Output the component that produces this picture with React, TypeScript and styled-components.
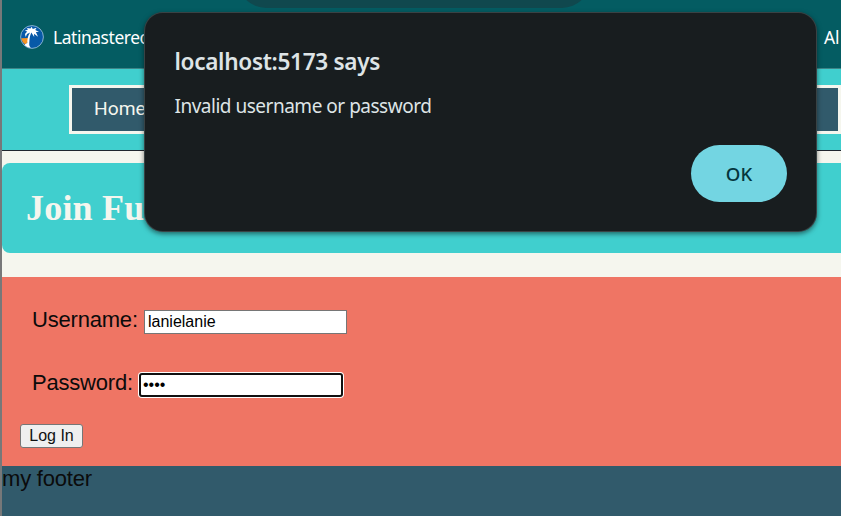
import React from "react";
import styled, { createGlobalStyle } from "styled-components";

const Global = createGlobalStyle`
  * { box-sizing: border-box; }
  html, body { margin: 0; overflow: hidden; background: #f5f6ee; }
`;

const ui = `"Noto Sans", "Open Sans", sans-serif`;
const arial = `"Liberation Sans", Arial, sans-serif`;

const Screen = styled.div`
  position: relative;
  width: 841px;
  height: 516px;
  overflow: hidden;
  border-left: 2px solid #777879;
  background: #f5f6ee;
  font-family: ${arial};
  color: #0b0b0b;
  display: flex;
  flex-direction: column;
`;

const BookmarkBar = styled.header`
  position: relative;
  flex: none;
  height: 69px;
  padding: 8px 0 0 18px;
  display: flex;
  align-items: center;
  justify-content: space-between;
  background: #045c62;
  border-bottom: 1px solid #3d8588;
  font: 17.4px/24px ${ui};
  color: #fff;
  white-space: nowrap;
`;

const Bookmark = styled.div`
  display: flex;
  align-items: center;
  gap: 9px;
  margin-top: -2px;
  letter-spacing: -0.42px;
`;

const AllBookmarks = styled.div`
  width: 17px;
  margin-top: -2px;
`;

const AddressPill = styled.div`
  position: absolute;
  top: -52px;
  left: 236px;
  width: 352px;
  height: 60px;
  border-radius: 28px;
  background: #10484e;
`;

const Nav = styled.nav`
  flex: none;
  height: 82px;
  padding: 16px 0 0 67px;
  background: #40cfce;
  border-bottom: 1px solid #20262e;
`;

const NavItem = styled.div`
  height: 49px;
  border: 3px solid #f5f6ee;
  background: #315a6b;
  padding-left: 22px;
  font: 19.2px/42px Roboto, sans-serif;
  color: #f5f6ee;
`;

const Banner = styled.h1`
  flex: none;
  height: 90px;
  margin: 12px 0 24px;
  padding-left: 24px;
  border-radius: 8px 0 0 8px;
  background: #40cfce;
  color: #f5f6ee;
  font: bold 36px/90px "Liberation Serif", serif;
  letter-spacing: 0.2px;
`;

const LoginForm = styled.form`
  flex: none;
  height: 189px;
  padding: 31px 18px 0;
  background: #ef7564;
  display: flex;
  flex-direction: column;
  align-items: flex-start;
`;

const Field = styled.label`
  display: flex;
  align-items: center;
  height: 26px;
  margin: 0 0 37px 12px;
  font-size: 22px;
  line-height: 26px;
`;

const Caption = styled.span<{ $width: number }>`
  width: ${(p) => p.$width}px;
  padding-bottom: 3px;
  letter-spacing: -0.2px;
  white-space: nowrap;
`;

const TextInput = styled.input<{ $active?: boolean }>`
  width: 203px;
  height: 24px;
  margin: 2px 0 0;
  padding: 0 3px;
  border: 1px solid #767676;
  border-radius: 0;
  outline: none;
  background: #fff;
  color: #000;
  font: 16px/20px ${arial};
  ${(p) =>
    p.$active &&
    `width: 204px; border: 2px solid #101010; border-radius: 3px; box-shadow: 0 0 0 1px #fff; padding: 0 2px;`}
`;

const LoginButton = styled.button`
  width: 63px;
  height: 24px;
  margin-top: -10px;
  padding: 0 0 1px;
  border: 1px solid #767676;
  border-radius: 3px;
  background: #efefef;
  color: #111;
  font: 16px/20px ${arial};
`;

const Footer = styled.footer`
  flex: 1;
  background: #315a6b;
  font-size: 22px;
  line-height: 25px;
  letter-spacing: -0.2px;
`;

const Dialog = styled.div`
  position: absolute;
  left: 143px;
  top: 13px;
  width: 671px;
  height: 218px;
  padding: 34px 29px 29px 29.5px;
  border-radius: 18px;
  background: #181d1f;
  box-shadow: 0 0 0 1px #394244, 0 2px 5px 1px rgba(0, 0, 0, 0.5);
  color: #dee4e6;
  font-family: ${ui};
  display: flex;
  flex-direction: column;
`;

const DialogTitle = styled.div`
  font-size: 22.6px;
  font-weight: 600;
  line-height: 30px;
  letter-spacing: -0.32px;
`;

const DialogMessage = styled.div`
  margin-top: 15px;
  font-size: 19px;
  line-height: 28px;
  letter-spacing: -0.49px;
`;

const OkButton = styled.button`
  width: 96px;
  height: 57px;
  margin: auto 0 0;
  align-self: flex-end;
  padding: 0;
  border: 0;
  border-radius: 29px;
  background: #73d5e2;
  color: #04363d;
  font: 500 18.6px/57px ${ui};
`;

const PalmIcon = () => (
  <svg width="24" height="24" viewBox="0 0 24 24">
    <circle cx="12" cy="12" r="11.4" fill="#0759a8" stroke="#a7c8df" strokeWidth="0.8" />
    <path d="M1.2 13.2 8.4 13 8 17 5.2 19.4Q2 17.5 1.2 13.2Z" fill="#f49324" />
    <path
      d="M11.3 7.5Q8.8 13 9.3 22.6Q5.8 21.2 4.7 19.7L7.3 18Q7 12 10.1 7.5L7 9.1 5.7 12 5 9 7.2 6.5 4.8 5.8 8 4.6 6.7 3 10.5 3.6 11.6 1.8 12.8 3.9 16.6 2.7 15.3 5 19 7.1 15.9 7 18 11.7 14 8.8 14.2 12Z"
      fill="#fff"
    />
    <path d="M6.5 18.5Q9.5 19.8 10.7 22.9Q6.7 22.3 4.6 20Z" fill="#fff" />
  </svg>
);

export default function App() {
  return (
    <>
      <Global />
      <Screen>
        <BookmarkBar>
          <AddressPill />
          <Bookmark>
            <PalmIcon />
            <span>Latinastereo</span>
          </Bookmark>
          <AllBookmarks>Al</AllBookmarks>
        </BookmarkBar>
        <Nav>
          <NavItem>Home</NavItem>
        </Nav>
        <Banner>Join Fun</Banner>
        <LoginForm>
          <Field>
            <Caption $width={112}>Username:</Caption>
            <TextInput defaultValue="lanielanie" />
          </Field>
          <Field>
            <Caption $width={107}>Password:</Caption>
            <TextInput $active type="password" defaultValue="1234" />
          </Field>
          <LoginButton type="button">Log In</LoginButton>
        </LoginForm>
        <Footer>my footer</Footer>
        <Dialog role="alertdialog">
          <DialogTitle>localhost:5173 says</DialogTitle>
          <DialogMessage>Invalid username or password</DialogMessage>
          <OkButton>OK</OkButton>
        </Dialog>
      </Screen>
    </>
  );
}
